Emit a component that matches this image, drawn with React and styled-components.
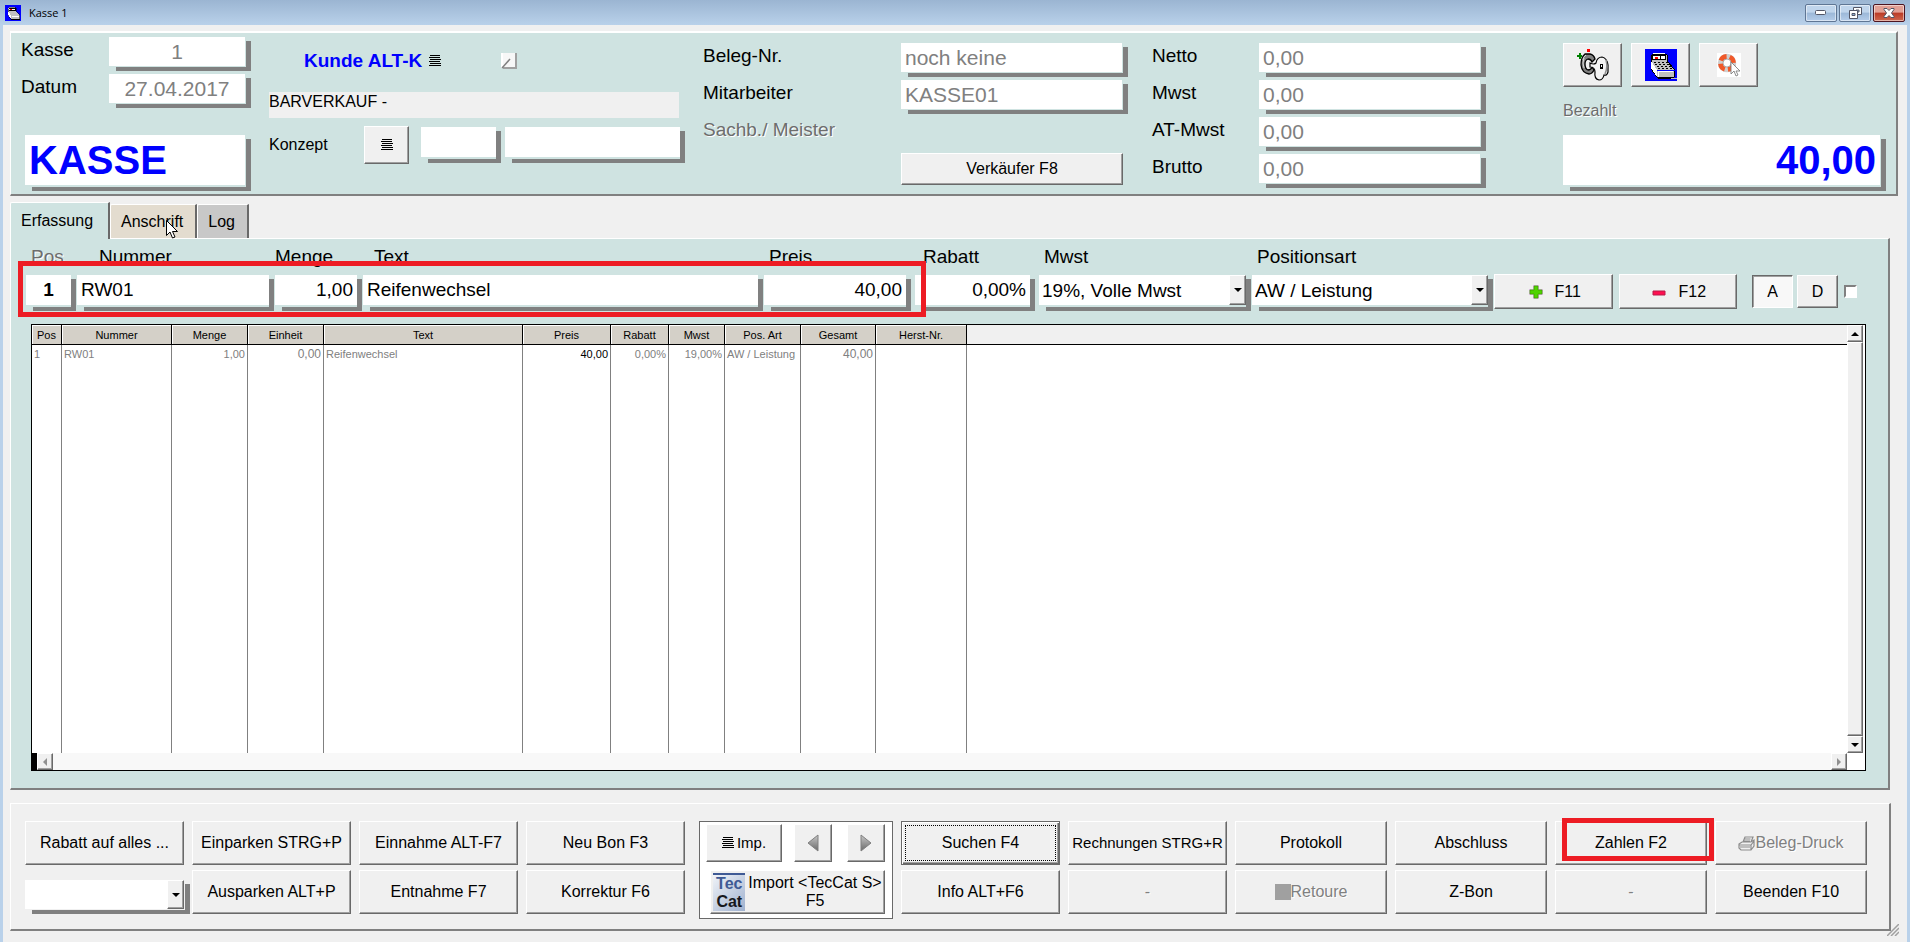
import React from "react";
import styled, { createGlobalStyle, css } from "styled-components";

const headers = [
  { label: "Pos", width: 30 },
  { label: "Nummer", width: 110 },
  { label: "Menge", width: 76 },
  { label: "Einheit", width: 76 },
  { label: "Text", width: 199 },
  { label: "Preis", width: 88 },
  { label: "Rabatt", width: 58 },
  { label: "Mwst", width: 56 },
  { label: "Pos. Art", width: 76 },
  { label: "Gesamt", width: 75 },
  { label: "Herst-Nr.", width: 91 },
];

const positions = [
  [
    { text: "1" },
    { text: "RW01" },
    { text: "1,00", right: true },
    { text: "0,00", right: true, big: true },
    { text: "Reifenwechsel" },
    { text: "40,00", right: true, dark: true },
    { text: "0,00%", right: true },
    { text: "19,00%", right: true },
    { text: "AW / Leistung" },
    { text: "40,00", right: true, big: true },
    { text: "" },
  ],
];

const sums = [
  { id: "netto", label: "Netto" },
  { id: "mwst", label: "Mwst" },
  { id: "atmwst", label: "AT-Mwst" },
  { id: "brutto", label: "Brutto" },
];

/* ---------- icons ---------- */

const ListIcon = () => (
  <svg width="12" height="12" viewBox="0 0 12 12" shapeRendering="crispEdges" aria-hidden="true">
    <path
      d="M1 0h10v1H1zM0 2h11v1H0zM1 4h11v1H1zM0 6h11v1H0zM1 8h11v1H1zM0 10h12v1H0z"
      fill="#000"
    />
  </svg>
);

const EditIcon = () => (
  <svg width="16" height="16" viewBox="0 0 16 16" aria-hidden="true">
    <path d="M0 0h15v15H0z" fill="#f7f7f7" />
    <path d="M15 0v15H2" fill="none" stroke="#a0a0a0" strokeWidth="2" />
    <path d="M1 0v15" stroke="#fff" strokeWidth="2" />
    <path d="M1 15L9 6" stroke="#808080" strokeWidth="1.5" />
  </svg>
);

const RegisterIcon = ({ size }) => (
  <svg width={size} height={size} viewBox="0 0 32 32" shapeRendering="crispEdges" aria-hidden="true">
    <path d="M0 0h32v32H0z" fill="#0000ff" />
    <path d="M7 5h13v-1H8z" fill="#fff" />
    <path d="M6 12V7l2-2h12l2 1v6l7 8v8l-2 1H13l-7-9z" fill="#c0c0c0" stroke="#000" />
    <path d="M7 6h14v5H7z" fill="#000" />
    <path d="M8 7h12v3H8z" fill="#fff" />
    <path d="M10 8h3v2h-3z" fill="#ff0000" />
    <path d="M15 7h1v3h-1z" fill="#000" />
    <path d="M6 12l6 9v7l-6-9z" fill="#fff" />
    <path
      d="M9 13h2v1H9zM13 13h2v1h-2zM17 13h2v1h-2zM21 13h2v1h-2zM10 15h2v1h-2zM14 15h2v1h-2zM18 15h2v1h-2zM22 15h2v1h-2zM12 17h2v1h-2zM16 17h2v1h-2zM20 17h2v1h-2zM24 17h2v1h-2zM13 19h2v1h-2zM17 19h2v1h-2zM21 19h2v1h-2zM25 19h2v1h-2z"
      fill="#000"
    />
    <path d="M12 21h18v1H12z" fill="#0000ff" />
    <path d="M13 22h15v6H13z" fill="#fff" />
    <path d="M14 23h14v5H14z" fill="#c0c0c0" />
    <path d="M12 28h17v1H12z" fill="#000" />
    <path d="M26 29h6v1h-6z" fill="#c0c0c0" />
  </svg>
);

const KeyIcon = () => (
  <svg width="34" height="34" viewBox="0 0 34 34" aria-hidden="true">
    <path d="M11 1h3v3h-3z" fill="#ff0000" />
    <path d="M3 5h2v2h1v2H5v2H3V9H1V7h2z" fill="#008000" />
    <path
      d="M9 6h5q4 1 5 5l-3 3q-1-3-4-3q-3 1-3 5q0 5 3 6q3 0 4-3l2 3q-2 4-5 4q-7-1-8-9q0-8 4-11z"
      fill="#808080"
      stroke="#000"
      strokeWidth="1.300"
    />
    <path d="M8 10q-2 5 0 10M10 7q-3 2-3 5" fill="none" stroke="#d8d8d8" strokeWidth="1" />
    <path
      d="M14 15q4 2 6 0q1-6 6-6q5 1 6 8v7q-1 4-4 3q-1 5-5 5q-5-1-4-8q0-5-5-5z"
      fill="#f4f4f4"
      stroke="#000"
      strokeWidth="1.2"
    />
    <path d="M30 12q2 7-1 14" fill="none" stroke="#909090" strokeWidth="1.500" />
    <path d="M24 16h3v5h-3z" fill="#000" />
    <path d="M25 17h1v2h-1z" fill="#fff" />
  </svg>
);

const HelpIcon = () => (
  <svg width="24" height="24" viewBox="0 0 24 24" aria-hidden="true">
    <path d="M0 0h24v24H0z" fill="#fff" />
    <circle cx="10" cy="10" r="6.500" fill="none" stroke="#d0d0d0" strokeWidth="5.500" />
    <circle
      cx="10"
      cy="10"
      r="6.500"
      fill="none"
      stroke="#f0592a"
      strokeWidth="4.800"
      strokeDasharray="7 3.210"
      strokeDashoffset="-2"
    />
    <circle cx="10" cy="10" r="4" fill="#fff" stroke="#9a9a9a" strokeWidth="0.800" />
    <path d="M14 9v12l3-3 2 5 2-1-2-4h4z" fill="#fff" stroke="#808080" strokeWidth="0.900" />
  </svg>
);

const PlusIcon = () => (
  <svg width="14" height="14" viewBox="0 0 14 14" aria-hidden="true">
    <path d="M5 1h4v4h4v4H9v4H5V9H1V5h4z" fill="#4fd000" stroke="#d9b8e0" strokeWidth="2" />
    <path d="M5 1h4v4h4v4H9v4H5V9H1V5h4z" fill="#4fd400" stroke="#3fa000" strokeWidth="0.800" />
  </svg>
);

const MinusIcon = () => (
  <svg width="14" height="14" viewBox="0 0 14 14" aria-hidden="true">
    <path d="M1 6h12v4H1z" fill="#ff0f50" stroke="#b81a48" strokeWidth="1" />
  </svg>
);

const PrinterIcon = () => (
  <svg width="17" height="15" viewBox="0 0 17 15" aria-hidden="true">
    <path
      d="M5 6l2-5h8l-2 5M6.500 3h6M6 5h6M1 8l3-2h9l3-2v6l-3 4H3l-2-2zM1 9h12l3-4M13 9v5M2 11h10"
      fill="none"
      stroke="#8c8c8c"
      strokeWidth="1.200"
    />
  </svg>
);

const MoveIcon = ({ left }) => (
  <svg width="12" height="18" viewBox="0 0 12 18" aria-hidden="true">
    <defs>
      <linearGradient id={left ? "mvl" : "mvr"} x1="0" y1="0" x2="0" y2="1">
        <stop offset="0" stopColor="#c8c8c8" />
        <stop offset="1" stopColor="#6a6a6a" />
      </linearGradient>
    </defs>
    <path
      d={left ? "M11 1v16L1 9z" : "M1 1v16l10-8z"}
      fill={left ? "url(#mvl)" : "url(#mvr)"}
      stroke="#808080"
    />
  </svg>
);

const ARROWS = {
  up: "M4 0l4 4H0z",
  down: "M0 0h8L4 4z",
};

const SmallArrow = ({ dir }) => (
  <svg width="8" height="4" viewBox="0 0 8 4" aria-hidden="true">
    <path d={ARROWS[dir]} fill="#000" />
  </svg>
);

const SideArrow = ({ left }) => (
  <svg width="5" height="8" viewBox="0 0 5 8" aria-hidden="true">
    <path d={left ? "M4 0v8L0 4z" : "M0 0v8l4-4z"} fill="#909090" />
  </svg>
);

/* ---------- building blocks ---------- */

const Field = ({ tall, big, children }) => (
  <FieldBox $tall={tall} $big={big}>
    {children}
  </FieldBox>
);

const EntryField = ({ id, label, indent, grow, gapEnd, muted, children }) => (
  <EntryCell $grow={grow} $gapEnd={gapEnd}>
    <EntryLabel htmlFor={id} $indent={indent} $muted={muted}>
      {label}
    </EntryLabel>
    <Field tall>{children}</Field>
  </EntryCell>
);

const Header = () => (
  <HeaderPanel>
    <Column>
      <FieldRow>
        <Label htmlFor="kasse">Kasse</Label>
        <Field>
          <Input id="kasse" $muted $size={21} $align="center" defaultValue="1" />
        </Field>
      </FieldRow>
      <FieldRow>
        <Label htmlFor="datum">Datum</Label>
        <Field>
          <Input id="datum" $muted $size={21} $align="center" defaultValue="27.04.2017" />
        </Field>
      </FieldRow>
      <Bottom $start={4}>
        <Field big>
          <BigInput aria-label="Modus" defaultValue="KASSE" />
        </Field>
      </Bottom>
    </Column>

    <Column>
      <CustomerRow>
        <CustomerButton type="button">
          Kunde ALT-K <ListIcon />
        </CustomerButton>
        <PlainButton type="button" aria-label="Kunde bearbeiten">
          <EditIcon />
        </PlainButton>
      </CustomerRow>
      <Customer>BARVERKAUF -</Customer>
      <ConceptRow>
        <ConceptLabel htmlFor="konzept">Konzept</ConceptLabel>
        <ConceptButton type="button" aria-label="Konzept wählen">
          <ListIcon />
        </ConceptButton>
        <ConceptShort>
          <Field tall>
            <Input id="konzept" $size={19} />
          </Field>
        </ConceptShort>
        <Field tall>
          <Input aria-label="Konzept Text" $size={19} />
        </Field>
      </ConceptRow>
    </Column>

    <Column $top={6} $end={6}>
      <FieldRow $label={198}>
        <Label htmlFor="beleg">Beleg-Nr.</Label>
        <Field>
          <Input id="beleg" $muted $size={21} defaultValue="noch keine" />
        </Field>
      </FieldRow>
      <FieldRow $label={198}>
        <Label htmlFor="mitarbeiter">Mitarbeiter</Label>
        <Field>
          <Input id="mitarbeiter" $muted $size={21} defaultValue="KASSE01" />
        </Field>
      </FieldRow>
      <FieldRow $label={198}>
        <Label as="span" $muted>
          Sachb./ Meister
        </Label>
      </FieldRow>
      <SellerButton type="button">Verkäufer F8</SellerButton>
    </Column>

    <Column $top={6} $end={59}>
      {sums.map((s) => (
        <FieldRow key={s.id} $label={107}>
          <Label htmlFor={s.id}>{s.label}</Label>
          <Field>
            <Input id={s.id} $muted $size={21} defaultValue="0,00" />
          </Field>
        </FieldRow>
      ))}
    </Column>

    <Column $top={6}>
      <IconRow>
        <IconButton type="button" aria-label="Schlüssel">
          <KeyIcon />
        </IconButton>
        <IconButton type="button" aria-label="Kasse öffnen">
          <RegisterIcon size={32} />
        </IconButton>
        <IconButton type="button" aria-label="Hilfe">
          <HelpIcon />
        </IconButton>
      </IconRow>
      <PaidLabel htmlFor="bezahlt">Bezahlt</PaidLabel>
      <Bottom>
        <Field big>
          <BigInput id="bezahlt" $align="right" defaultValue="40,00" />
        </Field>
      </Bottom>
    </Column>
  </HeaderPanel>
);

const Entry = () => (
  <EntryRow>
    <MarkedFields>
      <EntryField id="e-pos" label="Pos" indent={5} grow={50} muted>
        <Input id="e-pos" $size={19} $bold $align="center" defaultValue="1" />
      </EntryField>
      <EntryField id="e-nummer" label="Nummer" indent={22} grow={197}>
        <Input id="e-nummer" $size={19} defaultValue="RW01" />
      </EntryField>
      <EntryField id="e-menge" label="Menge" indent={0} grow={87}>
        <Input id="e-menge" $size={19} $align="right" defaultValue="1,00" />
      </EntryField>
      <EntryField id="e-text" label="Text" indent={11} grow={400}>
        <Input id="e-text" $size={19} defaultValue="Reifenwechsel" />
      </EntryField>
      <EntryField id="e-preis" label="Preis" indent={5} grow={147} gapEnd={3}>
        <Input id="e-preis" $size={19} $align="right" defaultValue="40,00" />
      </EntryField>
    </MarkedFields>
    <EntryField id="e-rabatt" label="Rabatt" indent={8} grow={120} gapEnd={3}>
      <Input id="e-rabatt" $size={19} $align="right" defaultValue="0,00%" />
    </EntryField>
    <EntryField id="e-mwst" label="Mwst" indent={5} grow={212}>
      <Select id="e-mwst">
        <option>19%, Volle Mwst</option>
      </Select>
      <SelectArrow>
        <SmallArrow dir="down" />
      </SelectArrow>
    </EntryField>
    <EntryField id="e-art" label="Positionsart" indent={5} grow={241}>
      <Select id="e-art">
        <option>AW / Leistung</option>
      </Select>
      <SelectArrow>
        <SmallArrow dir="down" />
      </SelectArrow>
    </EntryField>
    <Actions>
      <ActionButton type="button">
        <PlusIcon /> F11
      </ActionButton>
      <ActionButton type="button">
        <MinusIcon /> F12
      </ActionButton>
      <Toggles>
        <Toggle type="button" $pressed>
          A
        </Toggle>
        <Toggle type="button">D</Toggle>
      </Toggles>
      <Checkbox type="checkbox" aria-label="Fixieren" />
    </Actions>
  </EntryRow>
);

const Positions = () => (
  <TableFrame>
    <Table>
      <colgroup>
        {headers.map((h) => (
          <col key={h.label} style={{ width: h.width }} />
        ))}
        <col />
      </colgroup>
      <thead>
        <tr>
          {headers.map((h) => (
            <Th key={h.label}>{h.label}</Th>
          ))}
          <ThRest />
        </tr>
      </thead>
      <tbody>
        {positions.map((row, i) => (
          <DataRow key={i}>
            {row.map((c, j) => (
              <Td key={j} $right={c.right} $big={c.big} $dark={c.dark}>
                {c.text}
              </Td>
            ))}
            <TdRest />
          </DataRow>
        ))}
        <tr>
          {headers.map((h) => (
            <Td key={h.label} />
          ))}
          <TdRest />
        </tr>
      </tbody>
    </Table>
    <VScroll>
      <ScrollButton type="button" aria-label="Nach oben">
        <SmallArrow dir="up" />
      </ScrollButton>
      <Thumb />
      <ScrollButton type="button" aria-label="Nach unten">
        <SmallArrow dir="down" />
      </ScrollButton>
    </VScroll>
    <HScroll>
      <ScrollButton type="button" aria-label="Nach links">
        <SideArrow left />
      </ScrollButton>
      <ScrollButton type="button" aria-label="Nach rechts">
        <SideArrow />
      </ScrollButton>
    </HScroll>
  </TableFrame>
);

const Footer = () => (
  <FooterPanel>
    <Button type="button">Rabatt auf alles ...</Button>
    <Button type="button">Einparken STRG+P</Button>
    <Button type="button">Einnahme ALT-F7</Button>
    <Button type="button">Neu Bon F3</Button>
    <ImportGroup>
      <ImportTop>
        <ImpButton type="button" $compact>
          <ListIcon />
          Imp.
        </ImpButton>
        <MoveButton type="button" aria-label="Zurück">
          <MoveIcon left />
        </MoveButton>
        <MoveButton type="button" aria-label="Weiter">
          <MoveIcon />
        </MoveButton>
      </ImportTop>
      <TecCatButton type="button">
        <TecCatLogo>
          <span>Tec</span>
          <b>Cat</b>
        </TecCatLogo>
        <span>
          Import &lt;TecCat S&gt;
          <br />
          F5
        </span>
      </TecCatButton>
    </ImportGroup>
    <FocusButton type="button">
      <span>Suchen F4</span>
    </FocusButton>
    <Button type="button" $compact>
      Rechnungen STRG+R
    </Button>
    <Button type="button">Protokoll</Button>
    <Button type="button">Abschluss</Button>
    <Marked>
      <Button type="button">Zahlen F2</Button>
    </Marked>
    <Button type="button" disabled>
      <PrinterIcon />
      Beleg-Druck
    </Button>

    <DiscountSelect>
      <Field>
        <Select aria-label="Rabatt" />
        <SelectArrow>
          <SmallArrow dir="down" />
        </SelectArrow>
      </Field>
    </DiscountSelect>
    <Button type="button">Ausparken ALT+P</Button>
    <Button type="button">Entnahme F7</Button>
    <Button type="button">Korrektur F6</Button>
    <Button type="button">Info ALT+F6</Button>
    <Button type="button" disabled>
      -
    </Button>
    <Button type="button" disabled>
      <Swatch />
      Retoure
    </Button>
    <Button type="button">Z-Bon</Button>
    <Button type="button" disabled>
      -
    </Button>
    <Button type="button">Beenden F10</Button>
  </FooterPanel>
);

const App = () => {
  return (
    <Window>
      <GlobalStyle />
      <TitleBar>
        <RegisterIcon size={16} />
        <Title>Kasse 1</Title>
        <WindowButton type="button" aria-label="Minimieren">
          <svg width="12" height="6" viewBox="0 0 12 6">
            <rect x="0.5" y="0.5" width="10" height="4" rx="1" fill="#fff" stroke="#535666" />
          </svg>
        </WindowButton>
        <WindowButton type="button" aria-label="Wiederherstellen">
          <svg width="13" height="12" viewBox="0 0 13 12">
            <path d="M4.500 0.500h8v7h-8z" fill="#fff" stroke="#535666" />
            <path d="M7 3h3v2H7z" fill="#8fb0d6" stroke="#535666" />
            <path d="M0.500 3.500h8v8h-8z" fill="#fff" stroke="#535666" />
            <path d="M3 6.500h3v2H3z" fill="#8fb0d6" stroke="#535666" />
          </svg>
        </WindowButton>
        <WindowButton type="button" $close aria-label="Schließen">
          <svg width="12" height="10" viewBox="0 0 12 10">
            <path
              d="M1 0.500h3l2 2 2-2h3v1L8.500 5 11 8.500v1H8l-2-2-2 2H1v-1L3.500 5 1 1.500z"
              fill="#fff"
              stroke="#535666"
            />
          </svg>
        </WindowButton>
      </TitleBar>
      <Body>
        <Header />
        <Tabs role="tablist">
          <Tab type="button" role="tab" aria-selected="true" $active>
            Erfassung
          </Tab>
          <Tab type="button" role="tab" $hover>
            Anschrift
            <Cursor width="12" height="19" viewBox="0 0 12 19" aria-hidden="true">
              <path
                d="M0.500 0.500v15l3.500-3.500 2.500 6 2.500-1-2.500-5.500h5z"
                fill="#fff"
                stroke="#000"
              />
            </Cursor>
          </Tab>
          <Tab type="button" role="tab">
            Log
          </Tab>
        </Tabs>
        <MainPanel>
          <Entry />
          <Positions />
        </MainPanel>
        <Footer />
        <Grip width="12" height="12" viewBox="0 0 12 12" aria-hidden="true">
          <path d="M0 12L12 0M4 12l8-8M8 12l4-4" stroke="#a0a0a0" strokeWidth="1.5" />
        </Grip>
      </Body>
    </Window>
  );
};

export default App;

const teal = "#cfe3e1";
const face = "#f0f0f0";
const red = "#ed1c24";

const raised = css`
  border: 1px solid;
  border-color: #fff #696969 #696969 #fff;
  box-shadow: inset -1px -1px 0 #a0a0a0;
`;

const GlobalStyle = createGlobalStyle`
  *, *::before, *::after {
    box-sizing: border-box;
  }
  body {
    margin: 0;
    background: ${face};
  }
  button, input, select {
    font-family: inherit;
    color: inherit;
    margin: 0;
    border-radius: 0;
  }
`;

const Window = styled.div`
  display: flex;
  flex-direction: column;
  min-height: 100vh;
  font-family: "Liberation Sans", Arial, sans-serif;
  font-size: 16px;
  color: #000;
`;

const TitleBar = styled.header`
  display: flex;
  align-items: center;
  gap: 2px;
  height: 25px;
  padding: 0 5px;
  background: linear-gradient(#9bb5d2, #b9d1ea);
`;

const Title = styled.span`
  flex: 1;
  margin-left: 6px;
  font-family: "Open Sans", sans-serif;
  font-size: 11px;
`;

const WindowButton = styled.button`
  display: flex;
  align-items: center;
  justify-content: center;
  width: 32px;
  height: 18px;
  padding: 0;
  border: 1px solid ${(p) => (p.$close ? "#4c1420" : "#5f7694")};
  border-radius: 2px;
  box-shadow: inset 0 0 0 1px rgba(255, 255, 255, 0.5);
  background: ${(p) =>
    p.$close
      ? "linear-gradient(#e2a095 0 45%, #bb3a26 50%, #cf6850)"
      : "linear-gradient(#c0d5ec 0 45%, #9cb8d8 50%, #b5cdea)"};
`;

const Body = styled.main`
  position: relative;
  flex: 1;
  display: flex;
  flex-direction: column;
  padding: 6px 9px 11px 7px;
  border: solid #b9d1ea;
  border-width: 0 3px;
  background: ${face};
`;

const Grip = styled.svg`
  position: absolute;
  right: 8px;
  bottom: 6px;
`;

const HeaderPanel = styled.section`
  display: grid;
  grid-template-columns: 230fr 416fr 431fr 393fr 323fr;
  gap: 18px;
  padding: 4px 10px 3px 10px;
  border: solid;
  border-width: 2px 2px 2px 1px;
  border-color: #fff #808080 #808080 #fff;
  background: ${teal};
`;

const Column = styled.div`
  display: flex;
  flex-direction: column;
  gap: 3px;
  min-width: 0;
  min-height: 154px;
  padding-top: ${(p) => p.$top || 0}px;
  padding-right: ${(p) => p.$end || 0}px;
`;

const FieldRow = styled.div`
  display: grid;
  grid-template-columns: ${(p) => p.$label || 88}px 1fr;
  align-items: start;
  min-height: 34px;
`;

const Label = styled.label`
  font-size: 19px;
  line-height: 26px;
  white-space: nowrap;
  ${(p) =>
    p.$muted &&
    css`
      color: #6d6d6d;
      text-shadow: 1px 1px 0 #fff;
    `}
`;

/* white box with an offset bar to the right and below */
const FieldBox = styled.div`
  display: flex;
  flex: 1;
  min-width: 0;
  height: ${(p) => (p.$big ? 56 : p.$tall ? 36 : 34)}px;
  padding: 0 ${(p) => (p.$tall ? 5 : 6)}px ${(p) => (p.$big || p.$tall ? 6 : 5)}px 0;
  background:
    linear-gradient(#808080, #808080) 100% 4px / 5px 100% no-repeat,
    linear-gradient(#808080, #808080) 7px 100% / 100% 4px no-repeat;
`;

const Input = styled.input`
  flex: 1;
  width: 100%;
  min-width: 0;
  padding: 0 4px;
  border: 0;
  outline: 0;
  background: #fff;
  font-size: ${(p) => p.$size || 19}px;
  font-weight: ${(p) => (p.$bold ? 700 : 400)};
  text-align: ${(p) => p.$align || "left"};
  && {
    color: ${(p) => (p.$muted ? "#808080" : "#000")};
  }
`;

const BigInput = styled(Input)`
  font-size: 40px;
  font-weight: 700;
  && {
    color: #0000ff;
  }
`;

const Bottom = styled.div`
  display: flex;
  margin-top: auto;
  padding-left: ${(p) => p.$start || 0}px;
`;

const Button = styled.button`
  ${raised}
  display: flex;
  align-items: center;
  justify-content: center;
  min-width: 0;
  padding: 0;
  background: ${face};
  font-size: ${(p) => (p.$compact ? 15 : 16)}px;
  line-height: 18px;
  white-space: nowrap;
  &:disabled {
    color: #808080;
    text-shadow: 1px 1px 0 #fff;
  }
`;

const PlainButton = styled.button`
  display: flex;
  padding: 0;
  border: 0;
  background: none;
`;

const CustomerRow = styled.div`
  display: flex;
  align-items: center;
  gap: 60px;
  height: 26px;
  margin: 11px 0 15px;
  padding-left: 35px;
`;

const CustomerButton = styled(PlainButton)`
  align-items: center;
  gap: 7px;
  font-size: 19px;
  font-weight: 700;
  && {
    color: #0000ff;
  }
`;

const Customer = styled.div`
  height: 26px;
  margin: 0 6px 5px 0;
  background: ${face};
  line-height: 20px;
`;

const ConceptRow = styled.div`
  display: flex;
  align-items: center;
`;

const ConceptLabel = styled.label`
  width: 95px;
`;

const ConceptButton = styled(Button)`
  width: 45px;
  height: 38px;
  margin-right: 12px;
`;

const ConceptShort = styled.div`
  display: flex;
  width: 80px;
  margin-right: 4px;
`;

const SellerButton = styled(Button)`
  height: 32px;
  margin: -1px 5px 0 198px;
`;

const IconRow = styled.div`
  display: flex;
  gap: 9px;
`;

const IconButton = styled(Button)`
  width: 59px;
  height: 44px;
`;

const PaidLabel = styled.label`
  margin-top: 10px;
  color: #6d6d6d;
  line-height: 22px;
  text-shadow: 1px 1px 0 #fff;
`;

const Tabs = styled.div`
  display: flex;
  align-items: flex-end;
  height: 36px;
  margin-top: 6px;
`;

const Tab = styled.button`
  position: relative;
  height: ${(p) => (p.$active ? 37 : 34)}px;
  margin-bottom: ${(p) => (p.$active ? -1 : 0)}px;
  padding: 0 ${(p) => (p.$active ? 15 : 12)}px 0 10px;
  border: solid;
  border-width: 1px 2px 0 1px;
  border-color: #fff #696969 #fff #fff;
  border-top-left-radius: 2px;
  background: ${(p) => (p.$active ? teal : p.$hover ? "#e3dccf" : "#c8c8c8")};
  font-size: 16px;
`;

const Cursor = styled.svg`
  position: absolute;
  left: 55px;
  top: 15px;
`;

const MainPanel = styled.section`
  flex: 1;
  display: flex;
  flex-direction: column;
  margin-right: 8px;
  padding: 7px 22px 17px 15px;
  border: solid;
  border-width: 1px 2px 2px 1px;
  border-color: #fff #808080 #808080 #fff;
  background: ${teal};
`;

const EntryRow = styled.div`
  display: flex;
  gap: 1px;
  margin-right: 9px;
`;

const MarkedFields = styled.div`
  position: relative;
  flex: 888 1 0;
  display: flex;
  gap: 1px;
  min-width: 0;
  &::after {
    content: "";
    position: absolute;
    left: -8px;
    right: -12px;
    bottom: -6px;
    height: 56px;
    border: 5px solid ${red};
    pointer-events: none;
    z-index: 1;
  }
`;

const EntryCell = styled.div`
  flex: ${(p) => p.$grow} 1 0;
  display: flex;
  flex-direction: column;
  gap: 7px;
  min-width: 0;
  padding-right: ${(p) => p.$gapEnd || 0}px;
  ${FieldBox} {
    flex: none;
  }
`;

const EntryLabel = styled(Label)`
  padding-left: ${(p) => p.$indent}px;
  line-height: 22px;
`;

const Select = styled.select`
  flex: 1;
  min-width: 0;
  padding: 0 3px;
  border: 0;
  outline: 0;
  appearance: none;
  background: #fff;
  font-size: 19px;
`;

const SelectArrow = styled.span`
  ${raised}
  display: flex;
  align-items: center;
  justify-content: center;
  width: 17px;
  background: ${face};
`;

const Actions = styled.div`
  flex: 363 1 0;
  display: flex;
  align-items: center;
  align-self: flex-end;
  gap: 6px;
  height: 35px;
  margin-bottom: 2px;
`;

const ActionButton = styled(Button)`
  flex: 1;
  gap: 12px;
  height: 35px;
  padding-left: 3px;
`;

const Toggles = styled.div`
  display: flex;
  gap: 4px;
  margin-left: 9px;
`;

const Toggle = styled(Button)`
  width: 41px;
  height: 33px;
  ${(p) =>
    p.$pressed &&
    css`
      border-color: #696969 #fff #fff #696969;
      box-shadow: inset 1px 1px 0 #a0a0a0;
      background: #f8f8f8;
    `}
`;

const Checkbox = styled.input`
  appearance: none;
  width: 13px;
  height: 13px;
  border: 2px solid;
  border-color: #808080 #fff #fff #808080;
  background: #fff;
`;

const TableFrame = styled.div`
  flex: 1;
  display: grid;
  grid-template-columns: 1fr 16px;
  grid-template-rows: 1fr 17px;
  min-height: 160px;
  margin: 13px 0 0 5px;
  padding-right: 2px;
  border: 1px solid #000;
  background: #fff;
`;

const Table = styled.table`
  width: 100%;
  height: 100%;
  table-layout: fixed;
  border-collapse: separate;
  border-spacing: 0;
  font-size: 11px;
`;

const Th = styled.th`
  height: 20px;
  padding: 0;
  border-right: 1px solid #000;
  border-bottom: 1px solid #000;
  box-shadow: inset 1px 1px 0 #fff;
  background: #d4d0c8;
  font-weight: 400;
  white-space: nowrap;
`;

const ThRest = styled.td`
  padding: 0;
  border-bottom: 1px solid #000;
  background: ${face};
`;

const DataRow = styled.tr`
  height: 17px;
`;

const Td = styled.td`
  padding: 0 2px;
  border-right: 1px solid #808080;
  color: ${(p) => (p.$dark ? "#000" : "#808080")};
  font-size: ${(p) => (p.$big ? 12 : 11)}px;
  text-align: ${(p) => (p.$right ? "right" : "left")};
  white-space: nowrap;
`;

const TdRest = styled.td`
  padding: 0;
`;

const VScroll = styled.div`
  display: flex;
  flex-direction: column;
`;

const ScrollButton = styled(Button)`
  flex: none;
  width: 16px;
  height: 17px;
`;

const Thumb = styled.div`
  ${raised}
  flex: 1;
  background: ${face};
`;

const HScroll = styled.div`
  display: flex;
  justify-content: space-between;
  border-left: 5px solid #000;
  background: #f8f8f8;
`;

const FooterPanel = styled.section`
  display: grid;
  grid-template-columns:
    repeat(4, minmax(0, 159fr)) minmax(0, 200fr) repeat(2, minmax(0, 159fr))
    repeat(4, minmax(0, 152fr));
  grid-template-rows: 44px 44px;
  gap: 5px 8px;
  margin: 13px 7px 0 0;
  padding: 17px 22px 15px 14px;
  border: solid;
  border-width: 1px 2px 2px 1px;
  border-color: #fff #808080 #808080 #fff;
`;

const ImportGroup = styled.div`
  grid-row: span 2;
  display: flex;
  flex-direction: column;
  gap: 8px;
  margin: 0 0 -5px 6px;
  padding: 2px 7px 4px 6px;
  border: 1px solid #696969;
  background: #fff;
`;

const ImportTop = styled.div`
  display: flex;
  height: 38px;
`;

const ImpButton = styled(Button)`
  gap: 3px;
  width: 76px;
  margin-right: auto;
`;

const MoveButton = styled(Button)`
  width: 38px;
  & + & {
    margin-left: 15px;
  }
`;

const TecCatButton = styled(Button)`
  gap: 3px;
  height: 44px;
  margin-left: 4px;
  line-height: 18px;
`;

const TecCatLogo = styled.span`
  display: flex;
  flex-direction: column;
  width: 32px;
  height: 38px;
  border-top: 2px solid #3f5a95;
  background: linear-gradient(135deg, #f0f3f8, #9fb1cf);
  color: #3f5a95;
  font-size: 16px;
  font-weight: 700;
  line-height: 18px;
  b {
    color: #16181d;
  }
`;

const FocusButton = styled(Button)`
  border-color: #696969;
  box-shadow:
    inset 1px 1px 0 #fff,
    inset -1px -1px 0 #696969,
    inset -2px -2px 0 #a0a0a0;
  padding: 3px;
  span {
    display: flex;
    align-items: center;
    justify-content: center;
    width: 100%;
    height: 100%;
    border: 1px dotted #000;
  }
`;

const Marked = styled.div`
  position: relative;
  display: grid;
  &::after {
    content: "";
    position: absolute;
    inset: -3px -7px 4px 7px;
    border: 5px solid ${red};
    pointer-events: none;
    z-index: 1;
  }
`;

const DiscountSelect = styled.div`
  display: flex;
  align-self: end;
  margin-right: -6px;
`;

const Swatch = styled.span`
  width: 16px;
  height: 16px;
  background: #a0a0a0;
`;
